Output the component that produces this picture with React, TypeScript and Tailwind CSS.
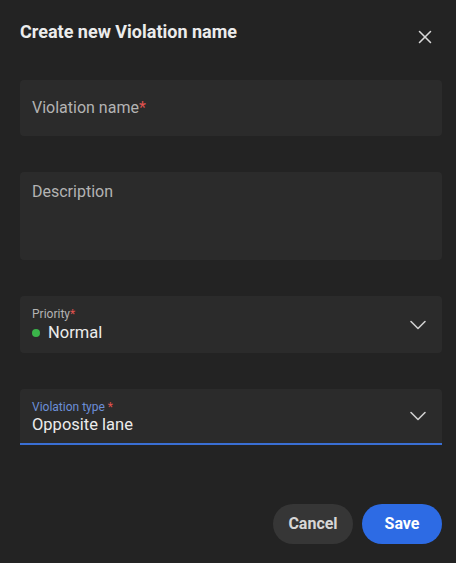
import { X, ChevronDown } from 'lucide-react';

export default function App() {
    return (
        <div className="w-[456px] h-[563px] bg-[#232323] font-['Roboto',sans-serif] flex flex-col pl-5 pr-[14px]">
            <div className="flex items-start justify-between pt-[21px]">
                <h1 className="text-[18px] font-bold leading-[22px] text-[#ececec]">Create new Violation name</h1>
                <button className="mt-[5px] mr-[6px] text-[#d8d8d8]">
                    <X className="w-[22px] h-[22px]" strokeWidth={1.7} />
                </button>
            </div>

            <div className="mt-[32px] h-[56px] rounded bg-[#2b2b2b] flex items-center px-3">
                <span className="text-base text-[#b3b3b3] -mt-[1px]">
                    Violation name<span className="text-[#e0524f]">*</span>
                </span>
            </div>

            <div className="mt-[36px] h-[88px] rounded bg-[#2b2b2b] px-3 pt-[8px]">
                <span className="text-base text-[#b3b3b3]">Description</span>
            </div>

            <div className="mt-[36px] h-[57px] rounded bg-[#2b2b2b] flex items-center justify-between pl-3 pr-[10px]">
                <div className="flex flex-col">
                    <span className="text-xs leading-4 text-[#b3b3b3]">
                        Priority<span className="text-[#e0524f]">*</span>
                    </span>
                    <div className="flex items-center gap-[8px] mt-[1px]">
                        <span className="w-[8px] h-[8px] rounded-full bg-[#3bb54a]" />
                        <span className="text-[16.5px] leading-5 text-[#ececec]">Normal</span>
                    </div>
                </div>
                <ChevronDown className="w-[28px] h-[28px] text-[#cfcfcf]" strokeWidth={1.4} />
            </div>

            <div className="mt-[36px] h-[56px] rounded-t bg-[#2b2b2b] border-b-2 border-[#3a6fd4] flex items-center justify-between pl-3 pr-[10px]">
                <div className="flex flex-col pt-[1px]">
                    <span className="text-xs leading-4 text-[#6c8fd8]">
                        Violation type <span className="text-[#e0524f]">*</span>
                    </span>
                    <span className="text-[16.5px] leading-5 text-[#ececec]">Opposite lane</span>
                </div>
                <ChevronDown className="w-[28px] h-[28px] text-[#cfcfcf]" strokeWidth={1.4} />
            </div>

            <div className="mt-auto mb-[19px] flex justify-end gap-[9px]">
                <button className="w-[80px] h-[40px] rounded-full bg-[#363636] text-base font-bold text-[#d6d6d6]">Cancel</button>
                <button className="w-[80px] h-[40px] rounded-full bg-[#2d6be4] text-base font-bold text-white">Save</button>
            </div>
        </div>
    );
}
